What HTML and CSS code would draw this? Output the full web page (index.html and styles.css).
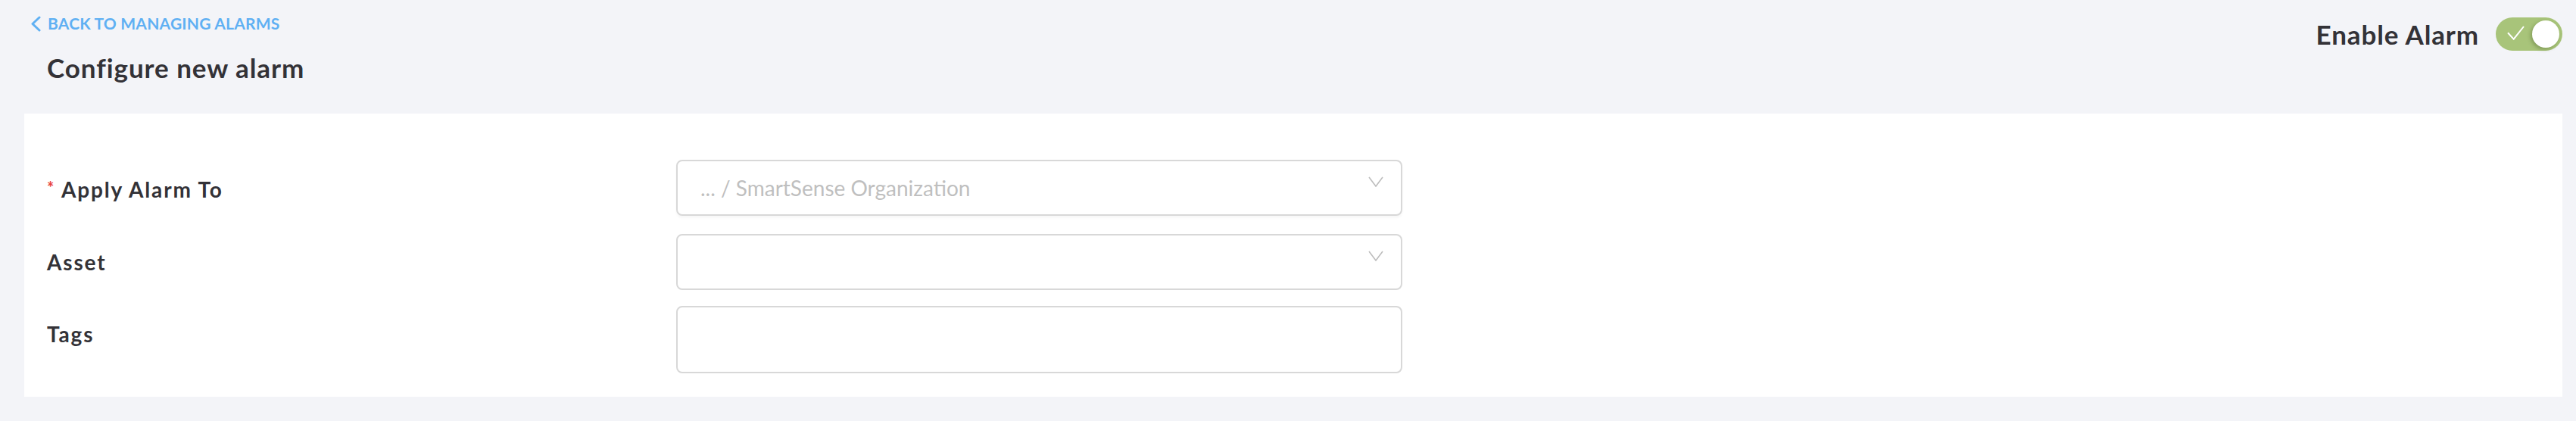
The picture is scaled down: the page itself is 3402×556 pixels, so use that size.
FILE: index.html
```html
<!DOCTYPE html>
<html lang="en">
<head>
<meta charset="utf-8">
<title>Configure new alarm</title>
<link rel="stylesheet" href="styles.css">
</head>
<body>
<div class="page">
  <header class="header">
    <div class="header-left">
      <a class="back-link" href="#">
        <svg class="back-icon" width="16" height="21" viewBox="0 0 16 21"><polyline points="13,2 4,10.5 13,19" fill="none" stroke="#5fb0f3" stroke-width="3" stroke-linecap="round" stroke-linejoin="round"/></svg>
        <span>BACK TO MANAGING ALARMS</span>
      </a>
      <h1 class="title">Configure new alarm</h1>
    </div>
    <div class="header-right">
      <span class="enable-label">Enable Alarm</span>
      <div class="toggle">
        <svg class="toggle-check" width="23" height="19" viewBox="0 0 23 19"><polyline points="1,9.3 8.7,17.7 22,1" fill="none" stroke="#ffffff" stroke-width="2"/></svg>
        <span class="toggle-knob"></span>
      </div>
    </div>
  </header>

  <section class="card">
    <div class="form">
      <div class="form-row">
        <label class="form-label"><span class="required">*</span> Apply Alarm To</label>
        <div class="field field-select field-focus">
          <span class="placeholder">... / SmartSense Organization</span>
          <svg class="chevron" width="20" height="14" viewBox="0 0 20 14"><polyline points="1,1 10,13 19,1" fill="none" stroke="#bdbdbd" stroke-width="1.6"/></svg>
        </div>
      </div>
      <div class="form-row">
        <label class="form-label">Asset</label>
        <div class="field field-select">
          <span class="placeholder"></span>
          <svg class="chevron" width="20" height="14" viewBox="0 0 20 14"><polyline points="1,1 10,13 19,1" fill="none" stroke="#bdbdbd" stroke-width="1.6"/></svg>
        </div>
      </div>
      <div class="form-row">
        <label class="form-label">Tags</label>
        <div class="field field-tags"></div>
      </div>
    </div>
  </section>
</div>
</body>
</html>
```

FILE: styles.css
```css
* { box-sizing: border-box; }

html, body {
  margin: 0;
  padding: 0;
  background: #f3f4f8;
  font-family: Lato, "Open Sans", Arial, sans-serif;
  color: #333237;
}

.page {
  padding: 0 18px 34px 32px;
}

.header {
  display: flex;
  justify-content: space-between;
  align-items: flex-start;
  height: 150px;
}

.header-left {
  display: flex;
  flex-direction: column;
  align-items: flex-start;
  padding-top: 19px;
}

.back-link {
  display: flex;
  align-items: center;
  gap: 8px;
  margin-left: 7px;
  height: 24px;
  color: #5fb0f3;
  text-decoration: none;
  font-size: 21px;
  font-weight: 700;
  line-height: 24px;
  letter-spacing: 0.01em;
}

.back-icon { display: block; flex: none; }

.title {
  margin: 26px 0 0 30px;
  font-size: 35px;
  line-height: 40px;
  font-weight: 700;
  letter-spacing: 0.027em;
}

.header-right {
  display: flex;
  align-items: center;
  gap: 22px;
  margin-top: 23px;
}

.enable-label {
  font-size: 35px;
  font-weight: 700;
  line-height: 44px;
  letter-spacing: 0.025em;
}

.toggle {
  width: 88px;
  height: 44px;
  border-radius: 22px;
  background: #a8c47a;
  display: flex;
  align-items: center;
  justify-content: space-between;
  padding: 0 4px 0 15px;
}

.toggle-check { display: block; margin-top: -3px; }

.toggle-knob {
  width: 36px;
  height: 36px;
  border-radius: 50%;
  background: #ffffff;
  box-shadow: -2px 2px 5px rgba(60, 80, 30, 0.35);
}

.card {
  background: #ffffff;
  padding: 61px 30px 31px 30px;
}

.form {
  display: flex;
  flex-direction: column;
  gap: 21.5px;
}

.form-row {
  display: grid;
  grid-template-columns: 831px 959px;
  align-items: start;
}

.form-label {
  font-size: 28px;
  font-weight: 700;
  line-height: 74px;
  letter-spacing: 0.065em;
  white-space: nowrap;
}

.required {
  color: #e8413c;
  font-size: 22px;
  vertical-align: 5px;
  letter-spacing: 0;
  margin-right: 2px;
}

.field {
  border: 2px solid #d8d8d8;
  border-radius: 8px;
  background: #ffffff;
  height: 74px;
}

.field-focus {
  box-shadow: 0 3px 3px rgba(0, 0, 0, 0.03);
}

.field-select {
  display: flex;
  justify-content: space-between;
  align-items: flex-start;
  padding: 0 23px 0 30px;
}

.placeholder {
  font-size: 28px;
  line-height: 70px;
  color: #bfbfbf;
  letter-spacing: 0;
}

.chevron {
  display: block;
  margin-top: 20px;
}

.field-tags {
  height: 89px;
}
```
